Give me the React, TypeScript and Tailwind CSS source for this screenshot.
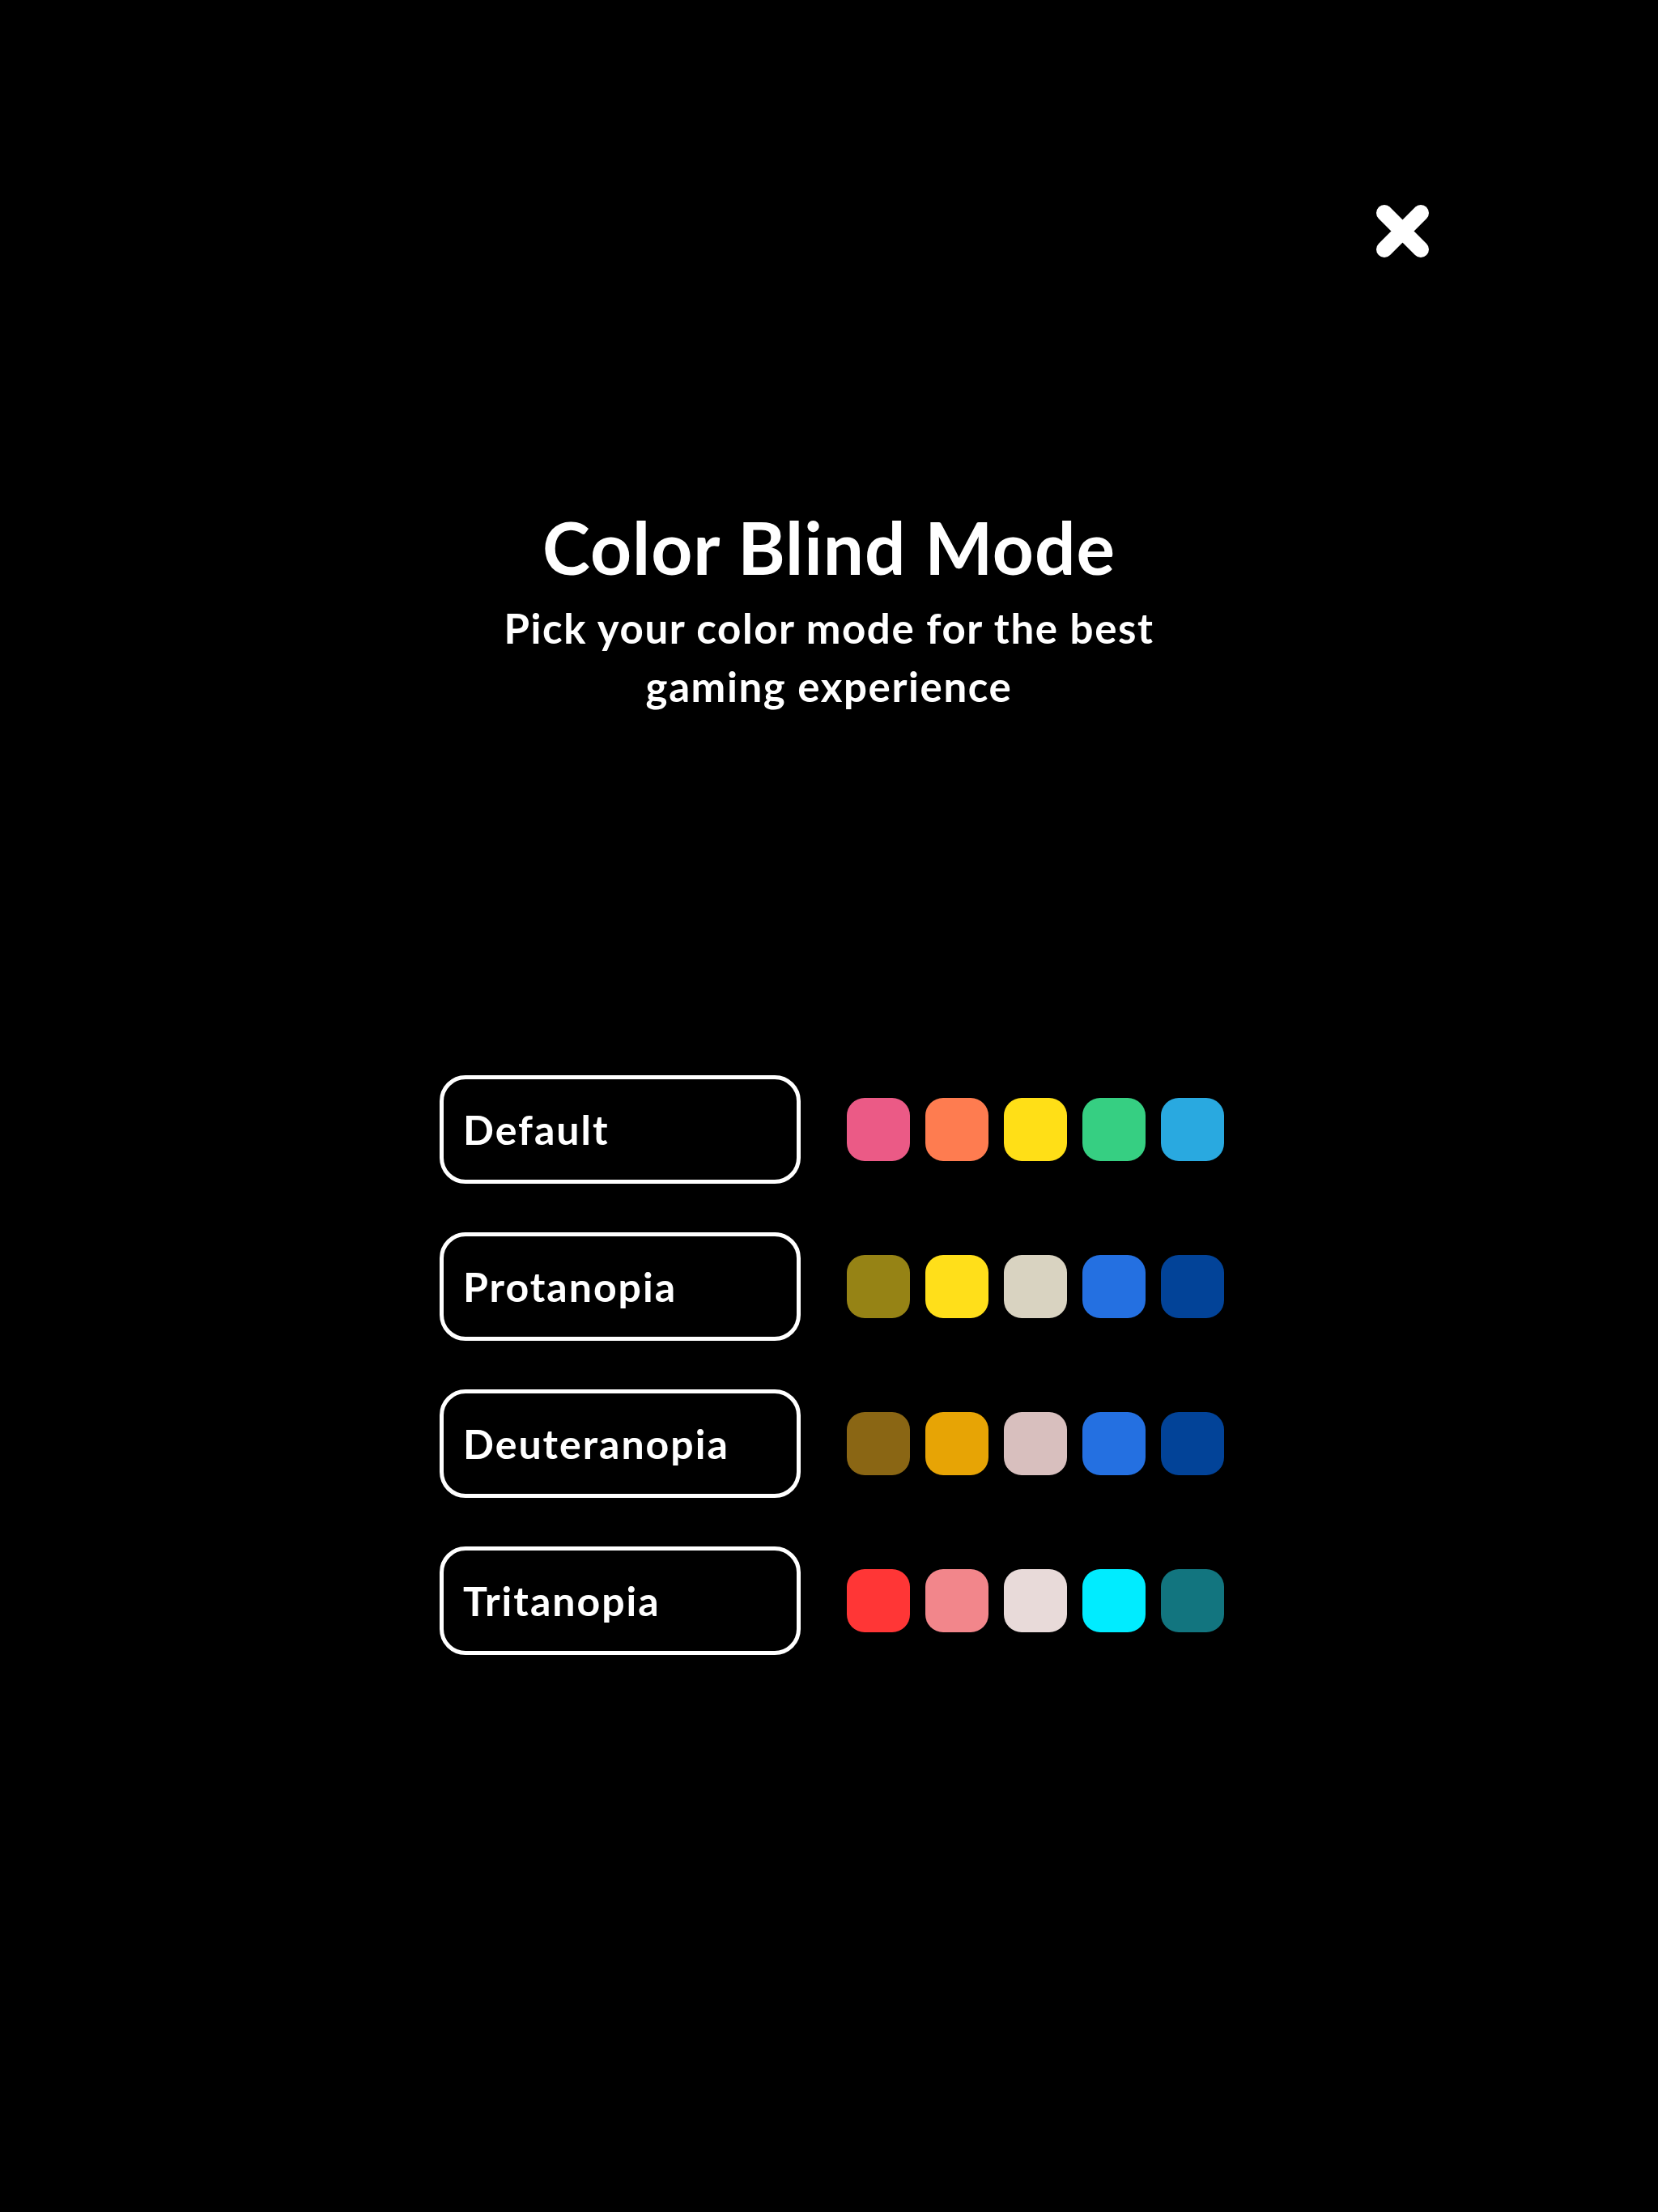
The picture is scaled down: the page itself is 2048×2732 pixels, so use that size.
import React from "react";

type Mode = { label: string; colors: string[] };

const modes: Mode[] = [
  { label: "Default", colors: ["#eb5a86", "#fe7c50", "#ffdf17", "#36cf82", "#29a9e0"] },
  { label: "Protanopia", colors: ["#968315", "#ffdf1a", "#d9d3c1", "#2470e1", "#024398"] },
  { label: "Deuteranopia", colors: ["#8a6614", "#e7a405", "#d8bfbe", "#2470e1", "#024398"] },
  { label: "Tritanopia", colors: ["#ff3636", "#f2868b", "#e8dad9", "#00ecff", "#12757f"] },
];

const font = { fontFamily: "Lato, 'Noto Sans', sans-serif" };

function CloseIcon() {
  return (
    <svg width="67" height="67" viewBox="0 0 67 67" fill="none">
      <path
        d="M11 11 L56 56 M56 11 L11 56"
        stroke="white"
        strokeWidth="20"
        strokeLinecap="round"
      />
    </svg>
  );
}

function ModeRow({ mode }: { mode: Mode }) {
  return (
    <div className="flex items-center gap-[57px]">
      <button className="flex h-[134px] w-[446px] items-center rounded-[32px] border-[5px] border-white bg-black pl-[24px] text-left">
        <span className="text-[50px] font-bold leading-none tracking-[2px] text-white">
          {mode.label}
        </span>
      </button>
      <div className="flex gap-[19px]">
        {mode.colors.map((c, i) => (
          <span
            key={i}
            className="block h-[78px] w-[78px] rounded-[22px]"
            style={{ backgroundColor: c }}
          />
        ))}
      </div>
    </div>
  );
}

export default function App() {
  return (
    <div className="flex min-h-[2732px] w-full flex-col bg-black" style={font}>
      <div className="flex justify-end pr-[282px] pt-[252px]">
        <button aria-label="Close" className="block h-[67px] w-[67px]">
          <CloseIcon />
        </button>
      </div>

      <h1 className="mt-[304px] text-center text-[89px] font-bold leading-[1.2] tracking-[1px] text-white">
        Color Blind Mode
      </h1>
      <p className="mx-auto mt-[10px] w-[900px] text-center text-[51px] font-bold leading-[72px] tracking-[1.6px] text-white">
        Pick your color mode for the best gaming experience
      </p>

      <div className="mt-[444px] flex flex-col items-center gap-[60px] pl-[7px]">
        {modes.map((m) => (
          <ModeRow key={m.label} mode={m} />
        ))}
      </div>
    </div>
  );
}
